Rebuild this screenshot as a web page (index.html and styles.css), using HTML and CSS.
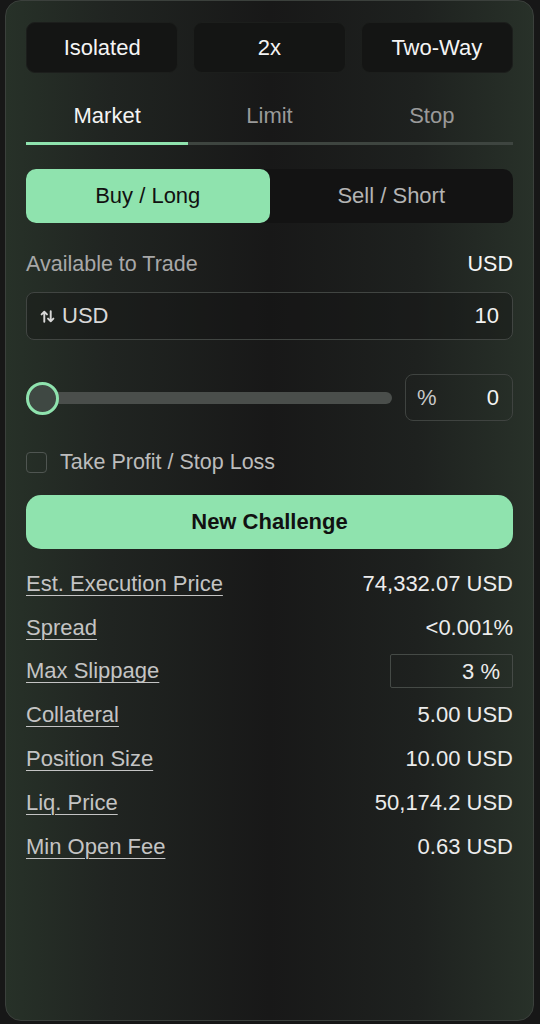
FILE: index.html
```html
<!DOCTYPE html>
<html lang="en">
<head>
    <meta charset="UTF-8">
    <title>Trade</title>
    <link rel="stylesheet" href="styles.css">
</head>
<body>
    <div class="panel">
        <!-- margin mode / leverage / position mode -->
        <div class="modes">
            <div class="mode-btn">Isolated</div>
            <div class="mode-btn">2x</div>
            <div class="mode-btn">Two-Way</div>
        </div>

        <!-- order type tabs -->
        <div class="tabs">
            <div class="tab active">Market</div>
            <div class="tab">Limit</div>
            <div class="tab">Stop</div>
        </div>

        <div class="side">
            <div class="side-btn buy">Buy / Long</div>
            <div class="side-btn sell">Sell / Short</div>
        </div>

        <div class="avail">
            <span class="avail-label">Available to Trade</span>
            <span class="avail-value">USD</span>
        </div>

        <div class="amount">
            <div class="amount-unit">
                <svg width="15" height="15" viewBox="0 0 14 14" fill="none" stroke="#d8d8d8" stroke-width="1.8" stroke-linecap="round" stroke-linejoin="round">
                    <path d="M4 12V2.5M1.5 5 4 2.5 6.5 5"/>
                    <path d="M10 2v9.5M7.5 9 10 11.5 12.5 9"/>
                </svg>
                <span>USD</span>
            </div>
            <span class="amount-value">10</span>
        </div>

        <div class="slider-row">
            <div class="slider">
                <div class="thumb"></div>
                <div class="track"></div>
            </div>
            <div class="pct">
                <span>%</span>
                <span class="pct-value">0</span>
            </div>
        </div>

        <div class="tpsl">
            <span class="check"></span>
            <span>Take Profit / Stop Loss</span>
        </div>

        <div class="submit">New Challenge</div>

        <div class="details">
            <div class="row"><span class="label">Est. Execution Price</span><span class="value">74,332.07 USD</span></div>
            <div class="row"><span class="label">Spread</span><span class="value">&lt;0.001%</span></div>
            <div class="row"><span class="label">Max Slippage</span><span class="slip">3 %</span></div>
            <div class="row"><span class="label">Collateral</span><span class="value">5.00 USD</span></div>
            <div class="row"><span class="label">Position Size</span><span class="value">10.00 USD</span></div>
            <div class="row"><span class="label">Liq. Price</span><span class="value">50,174.2 USD</span></div>
            <div class="row"><span class="label">Min Open Fee</span><span class="value">0.63 USD</span></div>
        </div>
    </div>
</body>
</html>
```

FILE: styles.css
```css
*{
    margin: 0;
    padding: 0;
    box-sizing: border-box;
}

body{
    background-color: #171717;
    font-family: "Liberation Sans", Arial, sans-serif;
    color: #f2f2f2;
    width: 540px;
    height: 1024px;
    overflow: hidden;
}

/* outer card */
.panel{
    margin: 0 6px 0 5px;
    height: 1021px;
    border: 1px solid #3b403c;
    border-radius: 16px;
    background: linear-gradient(90deg, #273128 0%, #202421 20%, #181818 50%, #1e211f 78%, #283129 100%);
    padding: 21px 20px 0 20px;
}

/* top buttons */
.modes{
    display: grid;
    grid-template-columns: repeat(3, 1fr);
    gap: 15px;
}

.mode-btn{
    height: 51px;
    border-radius: 9px;
    background-color: #141514;
    border: 1px solid #1c1e1c;
    display: flex;
    align-items: center;
    justify-content: center;
    font-size: 22px;
    color: #f4f4f4;
}

/* tabs */
.tabs{
    display: flex;
    margin-top: 20px;
    border-bottom: 3px solid #3e4540;
}

.tab{
    flex: 1;
    text-align: center;
    font-size: 22px;
    color: #9a9a9a;
    padding: 10px 0 13px;
    margin-bottom: -3px;
    border-bottom: 3px solid transparent;
}

.tab.active{
    color: #f4f4f4;
    border-bottom-color: #8fe3ae;
}

/* buy / sell */
.side{
    display: flex;
    margin-top: 24px;
    height: 54px;
    background-color: #131313;
    border-radius: 10px;
}

.side-btn{
    flex: 1;
    display: flex;
    align-items: center;
    justify-content: center;
    font-size: 22px;
    border-radius: 10px;
}

.buy{
    background-color: #8fe3ae;
    color: #111;
}

.sell{
    color: #b4b4b4;
}

/* available */
.avail{
    display: flex;
    justify-content: space-between;
    align-items: center;
    margin-top: 29px;
    font-size: 21.5px;
}

.avail-label{
    color: #a8a8a8;
}

.avail-value{
    color: #f4f4f4;
}

.amount{
    margin-top: 15px;
    height: 48px;
    border: 1px solid #414542;
    border-radius: 8px;
    display: flex;
    align-items: center;
    justify-content: space-between;
    padding: 0 13px 0 13px;
    font-size: 22px;
    background-color: rgba(20, 21, 20, 0.4);
}

.amount-unit{
    display: flex;
    align-items: center;
    gap: 7px;
    color: #d8d8d8;
}

/* slider */
.slider-row{
    display: flex;
    align-items: center;
    margin-top: 34px;
    gap: 13px;
}

.slider{
    flex: 1;
    position: relative;
    height: 34px;
    display: flex;
    align-items: center;
}

.track{
    flex: 1;
    height: 12px;
    border-radius: 6px;
    background-color: #4a4e4b;
}

.thumb{
    position: absolute;
    left: 0;
    top: 1px;
    width: 33px;
    height: 33px;
    border-radius: 50%;
    border: 3px solid #8fe3ae;
    background-color: #3f4843;
}

.pct{
    width: 108px;
    height: 47px;
    border: 1px solid #3f4340;
    border-radius: 8px;
    display: flex;
    align-items: center;
    justify-content: space-between;
    padding: 0 13px 0 11px;
    font-size: 22px;
    color: #c8c8c8;
}

.pct-value{
    color: #f4f4f4;
}

/* tp / sl */
.tpsl{
    display: flex;
    align-items: center;
    gap: 13px;
    margin-top: 29px;
    font-size: 21.5px;
    color: #bcbcbc;
}

.check{
    width: 21px;
    height: 21px;
    border: 1.5px solid #4f5551;
    border-radius: 4px;
}

.submit{
    margin-top: 20px;
    height: 54px;
    border-radius: 15px;
    background-color: #8fe3ae;
    color: #111;
    font-size: 22px;
    font-weight: bold;
    display: flex;
    align-items: center;
    justify-content: center;
}

/* details */
.details{
    margin-top: 13px;
}

.row{
    display: flex;
    justify-content: space-between;
    align-items: center;
    height: 43.8px;
    font-size: 22px;
}

.label{
    color: #c4c4c4;
    text-decoration: underline;
    text-underline-offset: 4px;
    text-decoration-thickness: 1px;
}

.value{
    color: #ececec;
}

.slip{
    width: 123px;
    height: 34px;
    border: 1px solid #454a46;
    border-radius: 2px;
    text-align: right;
    padding: 4px 12px 0 0;
    color: #ececec;
}
```
